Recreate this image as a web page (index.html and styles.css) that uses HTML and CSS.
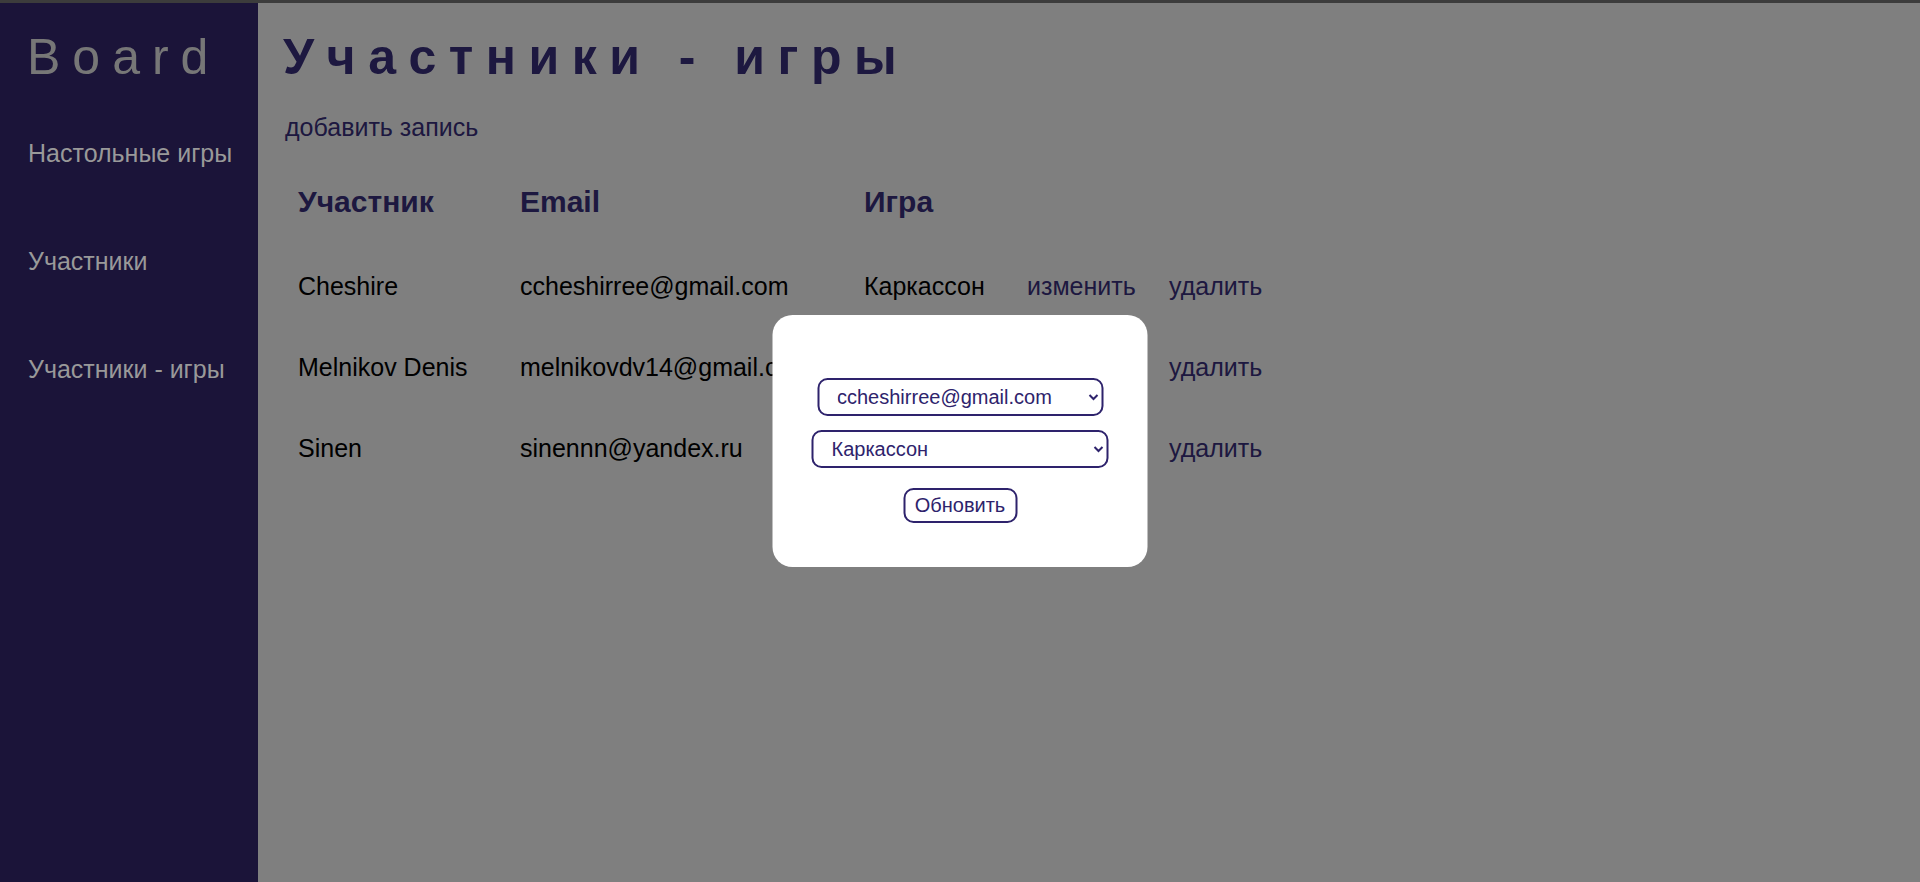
FILE: index.html
```html
<!DOCTYPE html>
<html lang="ru">
<head>
<meta charset="utf-8">
<title>Участники - игры</title>
<link rel="stylesheet" href="styles.css">
</head>
<body>
<div class="topbar"></div>
<div class="layout">
  <aside class="sidebar">
    <div class="brand">Board</div>
    <nav class="nav">
      <a class="nav-link" href="#">Настольные игры</a>
      <a class="nav-link" href="#">Участники</a>
      <a class="nav-link" href="#">Участники - игры</a>
    </nav>
  </aside>
  <main class="content">
    <h1 class="title">Участники - игры</h1>
    <a class="add-link" href="#">добавить запись</a>
    <table class="grid">
      <thead>
        <tr>
          <th class="col-name">Участник</th>
          <th class="col-email">Email</th>
          <th class="col-game">Игра</th>
          <th class="col-edit"></th>
          <th class="col-del"></th>
        </tr>
      </thead>
      <tbody>
        <tr>
          <td>Cheshire</td>
          <td>ccheshirree@gmail.com</td>
          <td>Каркассон</td>
          <td><a class="row-link" href="#">изменить</a></td>
          <td><a class="row-link" href="#">удалить</a></td>
        </tr>
        <tr>
          <td>Melnikov Denis</td>
          <td>melnikovdv14@gmail.com</td>
          <td>Каркассон</td>
          <td><a class="row-link" href="#">изменить</a></td>
          <td><a class="row-link" href="#">удалить</a></td>
        </tr>
        <tr>
          <td>Sinen</td>
          <td>sinennn@yandex.ru</td>
          <td>Каркассон</td>
          <td><a class="row-link" href="#">изменить</a></td>
          <td><a class="row-link" href="#">удалить</a></td>
        </tr>
      </tbody>
    </table>
  </main>
</div>
<div class="backdrop"></div>
<div class="modal">
  <select class="field field-email">
    <option>ccheshirree@gmail.com</option>
    <option>melnikovdv14@gmail.com</option>
    <option>sinennn@yandex.ru</option>
  </select>
  <select class="field field-game">
    <option>Каркассон</option>
  </select>
  <button class="update-btn" type="button">Обновить</button>
</div>
</body>
</html>
```
FILE: styles.css
```css
html, body {
  margin: 0;
  padding: 0;
  height: 100%;
  overflow: hidden;
}
body {
  font-family: "Liberation Sans", Arial, sans-serif;
  background: #ffffff;
  color: #000000;
}
.topbar {
  height: 3px;
  background: #787878;
}
.layout {
  display: flex;
  height: calc(100vh - 3px);
}
.sidebar {
  position: relative;
  z-index: 6;
  width: 258px;
  flex: 0 0 258px;
  background: #1b1439;
  padding-top: 25px;
  box-sizing: border-box;
}
.brand {
  font-size: 50px;
  line-height: 58px;
  letter-spacing: 12px;
  color: #777777;
  padding-left: 27px;
}
.nav {
  display: flex;
  flex-direction: column;
  gap: 79px;
  margin-top: 53px;
  padding-left: 28px;
}
.nav-link {
  font-size: 25px;
  line-height: 29px;
  color: #999999;
  text-decoration: none;
}
.content {
  flex: 1;
  padding: 25px 25px 0 25px;
}
.title {
  margin: 0;
  font-size: 50px;
  line-height: 58px;
  font-weight: bold;
  letter-spacing: 12.5px;
  color: #3a3080;
}
.add-link {
  display: block;
  margin-top: 27px;
  padding-left: 2px;
  font-size: 25px;
  line-height: 29px;
  color: #3a3080;
  text-decoration: none;
}
.grid {
  margin-top: 15px;
  margin-left: 15px;
  border-collapse: collapse;
  border-spacing: 0;
}
.grid th {
  height: 89px;
  padding: 0;
  font-size: 30px;
  line-height: 35px;
  font-weight: bold;
  text-align: left;
  vertical-align: middle;
  color: #3a3080;
}
.grid td {
  height: 81px;
  padding: 0;
  font-size: 25px;
  line-height: 29px;
  vertical-align: middle;
  white-space: nowrap;
}
.col-name { width: 222px; }
.col-email { width: 344px; }
.col-game { width: 163px; }
.col-edit { width: 142px; }
.row-link {
  color: #3a3080;
  text-decoration: none;
}
.backdrop {
  position: fixed;
  inset: 0;
  z-index: 5;
  background: rgba(0, 0, 0, 0.5);
}
.modal {
  position: fixed;
  z-index: 10;
  top: 50%;
  left: 50%;
  transform: translate(-50%, -50%);
  width: 375px;
  box-sizing: border-box;
  padding: 63px 0 44px;
  background: #ffffff;
  border-radius: 20px;
  display: flex;
  flex-direction: column;
  align-items: center;
}
.field {
  height: 38px;
  box-sizing: border-box;
  border: 2px solid #2e236c;
  border-radius: 10px;
  background: #ffffff;
  font-family: "Liberation Sans", Arial, sans-serif;
  font-size: 20px;
  color: #2e236c;
  padding: 0 10px 0 14px;
}
.field-email { width: 286px; }
.field-game { width: 297px; margin-top: 14px; }
.update-btn {
  margin-top: 20px;
  width: 114px;
  height: 35px;
  box-sizing: border-box;
  border: 2px solid #2e236c;
  border-radius: 10px;
  background: #ffffff;
  font-family: "Liberation Sans", Arial, sans-serif;
  font-size: 20px;
  color: #2e236c;
  padding: 0;
}
```
